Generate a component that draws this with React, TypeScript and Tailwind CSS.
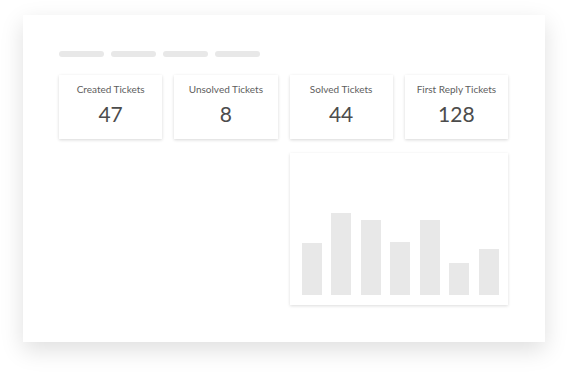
import React from "react";

const stats = [
  { label: "Created Tickets", value: "47" },
  { label: "Unsolved Tickets", value: "8" },
  { label: "Solved Tickets", value: "44" },
  { label: "First Reply Tickets", value: "128" },
];

const bars = [52, 82, 75, 53, 75, 32, 46];

export default function App() {
  return (
    <div
      className="w-[568px] h-[372px] bg-white pt-[15px] pl-[23px] overflow-hidden"
      style={{ fontFamily: "Lato, 'Open Sans', sans-serif" }}
    >
      <div className="w-[522px] h-[327px] bg-white shadow-[0_8px_22px_rgba(0,0,0,0.13)] pt-[36px] pl-[36px]">
        <div className="flex gap-[7px]">
          {[0, 1, 2, 3].map((i) => (
            <div key={i} className="w-[45px] h-[6px] rounded-full bg-[#e8e8e8]" />
          ))}
        </div>
        <div className="mt-[18px] grid grid-cols-4 gap-x-[12px] gap-y-[14px] w-[449px]">
          {stats.map((s) => (
            <div
              key={s.label}
              className="h-[64px] bg-white shadow-[0_1px_3px_rgba(0,0,0,0.16)] flex flex-col items-center pt-[7px]"
            >
              <div className="text-[10px] leading-[14px] text-[#5e5e5e]">{s.label}</div>
              <div className="mt-[6px] text-[21px] leading-[24px] text-[#4c4c4c]">{s.value}</div>
            </div>
          ))}
          <div className="col-start-3 col-span-2 h-[152px] bg-white shadow-[0_1px_3px_rgba(0,0,0,0.14)] flex items-end justify-between pl-[12px] pr-[9px] pb-[10px]">
            {bars.map((h, i) => (
              <div key={i} className="w-[20px] bg-[#e8e8e8]" style={{ height: h }} />
            ))}
          </div>
        </div>
      </div>
    </div>
  );
}
